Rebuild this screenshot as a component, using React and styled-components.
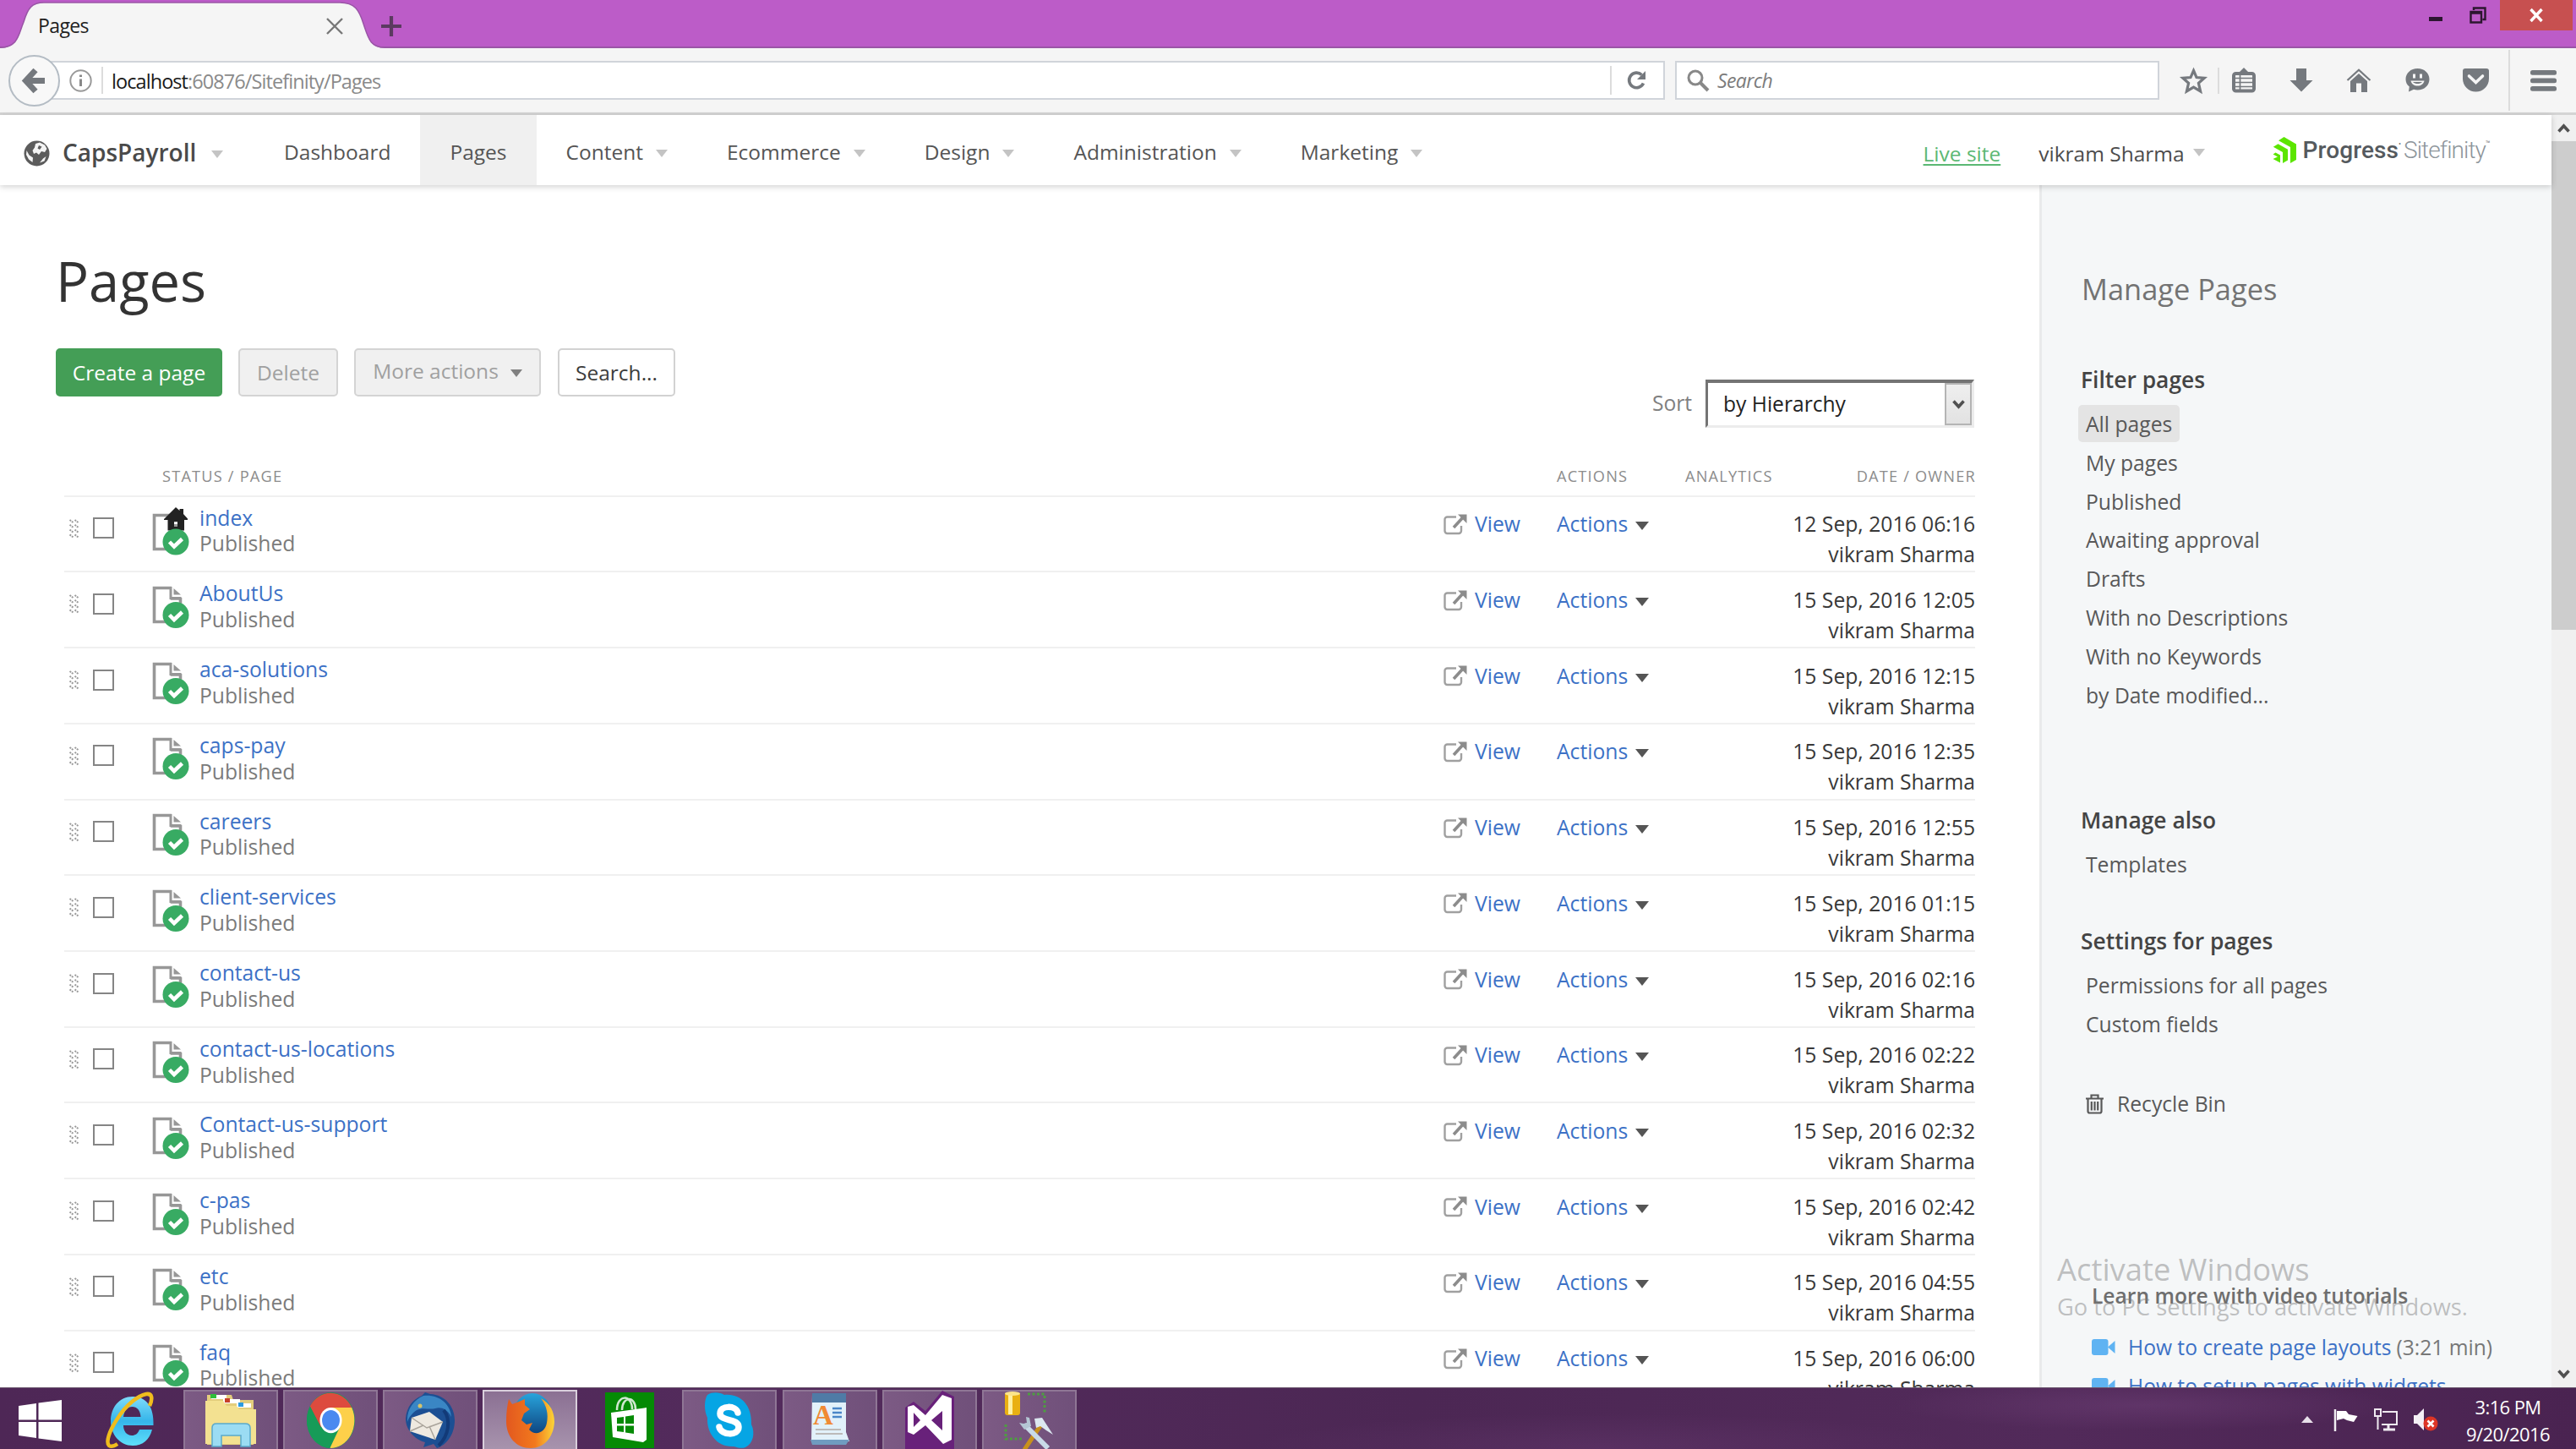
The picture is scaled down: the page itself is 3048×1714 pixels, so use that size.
import React from "react";
import styled, { createGlobalStyle, css } from "styled-components";

const Global = createGlobalStyle`
  * { box-sizing: border-box; }
  html, body { margin: 0; padding: 0; overflow: hidden; }
  body { font-family: "Open Sans", "Noto Sans", sans-serif; color: #444; background: #fff; }
  svg { display: block; flex: none; overflow: visible; }
`;

const Screen = styled.div`
  width: 3048px;
  height: 1714px;
  display: flex;
  flex-direction: column;
  overflow: hidden;
  background: #fff;
`;

/* ---------- browser chrome ---------- */

const TitleBar = styled.header`
  height: 57px;
  flex: none;
  display: flex;
  align-items: flex-start;
  background: #bc5cc8;
  border-bottom: 2px solid #9a55a6;
  position: relative;
`;

const Tab = styled.div`
  width: 451px;
  height: 57px;
  padding: 0 45px 0 45px;
  display: flex;
  align-items: center;
  justify-content: space-between;
  position: relative;
  z-index: 1;
`;

const TabShape = styled.svg`
  position: absolute;
  left: 0;
  top: 0;
`;

const TabTitle = styled.span`
  position: relative;
  font-size: 23px;
  letter-spacing: -0.6px;
  line-height: 32px;
  color: #222;
  padding-top: 3px;
`;

const TabClose = styled.svg`
  position: relative;
  top: 2px;
`;

const NewTab = styled.div`
  padding: 19px 0 0 0;
`;

const WindowButtons = styled.div`
  margin-left: auto;
  height: 36px;
  display: flex;
  padding-right: 4px;
`;

const WindowButton = styled.div`
  width: ${(p) => p.$width}px;
  height: 36px;
  display: flex;
  justify-content: center;
  align-items: ${(p) => (p.$low ? "flex-end" : "center")};
  padding-bottom: ${(p) => (p.$low ? 11 : 0)}px;
  background: ${(p) => (p.$close ? "#c75050" : "transparent")};
`;

const Toolbar = styled.div`
  height: 79px;
  flex: none;
  display: flex;
  align-items: center;
  padding: 0 23px 0 10px;
  background: #f5f5f5;
  border-bottom: 3px solid #d4d4d4;
`;

const BackButton = styled.div`
  width: 61px;
  height: 61px;
  flex: none;
  border: 2px solid #b4bcc4;
  border-radius: 50%;
  background: #f8f8f8;
  display: flex;
  align-items: center;
  justify-content: center;
  position: relative;
  z-index: 1;
`;

const UrlBar = styled.div`
  width: 1911px;
  height: 46px;
  margin-left: -12px;
  padding-left: 21px;
  flex: none;
  border: 2px solid #d0d4da;
  background: #fff;
  display: flex;
  align-items: center;
`;

const ThinRule = styled.div`
  width: 2px;
  height: ${(p) => p.$height}px;
  flex: none;
  margin: ${(p) => p.$margin};
  background: #dcdcdc;
`;

const UrlText = styled.span`
  padding-top: 2px;
  font-size: 23.5px;
  letter-spacing: -0.93px;
  color: #8a8a8a;
  b { font-weight: 400; color: #1a1a1a; }
`;

const ReloadCell = styled.div`
  margin-left: auto;
  display: flex;
  align-items: center;
  padding-right: 19px;
`;

const SearchBox = styled.div`
  width: 573px;
  height: 46px;
  margin-left: 12px;
  padding-left: 12px;
  flex: none;
  border: 2px solid #d0d4da;
  background: #fff;
  display: flex;
  align-items: center;
  gap: 9px;
  font-size: 23px;
  font-style: italic;
  letter-spacing: -0.6px;
  color: #7c7c7c;
`;

const ToolIcons = styled.div`
  flex: 1;
  display: flex;
  align-items: center;
  justify-content: space-between;
  margin-left: 25px;
`;

const IconGroup = styled.div`
  display: flex;
  align-items: center;
  gap: ${(p) => p.$gap}px;
`;

/* ---------- site navigation ---------- */

const Page = styled.div`
  flex: 1;
  min-height: 0;
  display: flex;
`;

const PageView = styled.div`
  width: 3019px;
  flex: none;
  display: flex;
  flex-direction: column;
`;

const NavBar = styled.nav`
  height: 83px;
  flex: none;
  display: flex;
  align-items: stretch;
  background: #fff;
  box-shadow: 0 2px 7px rgba(0, 0, 0, 0.18);
  position: relative;
  z-index: 2;
  padding-left: 28px;
`;

const Brand = styled.div`
  width: 273px;
  display: flex;
  align-items: center;
  color: #4a4a4a;
  font-weight: 600;
  font-size: 28px;
  padding-top: 8px;
`;

const BrandName = styled.span`
  margin: -3px 18px 0 15px;
`;

const NavItem = styled.div`
  display: flex;
  align-items: center;
  gap: 15px;
  padding: 4px 35px 0 35px;
  font-size: 24.5px;
  color: #555;
  background: ${(p) => (p.$active ? "#f0f0f0" : "transparent")};
`;

const Caret = styled.i`
  width: 0;
  height: 0;
  flex: none;
  margin-top: ${(p) => p.$drop || 0}px;
  border-left: ${(p) => p.$size || 7.5}px solid transparent;
  border-right: ${(p) => p.$size || 7.5}px solid transparent;
  border-top: ${(p) => (p.$size || 7.5) * 1.25}px solid ${(p) => p.$color || "#c4c4c4"};
`;

const NavRight = styled.div`
  margin-left: auto;
  display: flex;
  align-items: center;
  padding: 8px 77px 0 0;
  font-size: 24.5px;
  color: #4c4c4c;
`;

const LiveSite = styled.a`
  color: #5bb873;
  text-decoration: underline;
  text-decoration-thickness: 2px;
  text-underline-offset: 3px;
  margin-right: 45px;
`;

const UserName = styled.span`
  margin-right: 10px;
`;

const Logo = styled.div`
  display: flex;
  align-items: center;
  margin: -9px 0 0 80px;
  font-family: Roboto, "Liberation Sans", sans-serif;
  font-size: 28px;
`;

const LogoStrong = styled.span`
  margin-left: 7px;
  font-weight: 500;
  color: #555a5e;
  letter-spacing: 0.1px;
`;

const LogoLight = styled.span`
  margin-left: 5px;
  font-weight: 300;
  color: #8d959b;
  letter-spacing: -0.9px;
`;

const LogoMark = styled.sup`
  font-size: 9px;
  line-height: 1;
  align-self: flex-start;
  color: #777;
  margin-top: 5px;
  width: 1px;
`;

/* ---------- scrollbar ---------- */

const Scrollbar = styled.div`
  flex: 1;
  display: flex;
  flex-direction: column;
  justify-content: space-between;
  background: #f0f0f0;
`;

const ScrollCap = styled.div`
  height: 31px;
  display: flex;
  align-items: center;
  justify-content: center;
`;

const ScrollThumb = styled.div`
  height: 578px;
  margin-bottom: auto;
  background: #cdcdcd;
`;

/* ---------- main column ---------- */

const Content = styled.div`
  flex: 1;
  min-height: 0;
  display: flex;
  overflow: hidden;
`;

const Main = styled.main`
  width: 2413px;
  flex: none;
  padding: 73px 76px 0 66px;
`;

const Title = styled.h1`
  margin: 0 0 40px;
  font-weight: 400;
  font-size: 65px;
  line-height: 80px;
  color: #333;
`;

const ActionBar = styled.div`
  height: 94px;
  display: flex;
  align-items: flex-start;
`;

const Button = styled.button`
  width: ${(p) => p.$width}px;
  height: 57px;
  margin: 0 ${(p) => p.$gap || 0}px 0 0;
  padding: 0 0 ${(p) => p.$lift || 0}px;
  display: flex;
  align-items: center;
  justify-content: center;
  gap: 14px;
  white-space: nowrap;
  font-family: inherit;
  font-size: 24.5px;
  border-radius: 5px;
  border: 2px solid #d2d2d2;
  background: #fff;
  color: #3c3c3c;
  ${(p) => p.$primary && css`background: #449e56; border-color: #449e56; color: #fff;`}
  ${(p) => p.$disabled && css`background: #f0f0f0; border-color: #d4d4d4; color: #a0a0a0;`}
`;

const Sort = styled.label`
  margin: 37px 1px 0 auto;
  display: flex;
  align-items: center;
  font-size: 24.6px;
  color: #808080;
`;

const SortText = styled.span`
  padding-bottom: 2px;
`;

const Select = styled.div`
  width: 318px;
  height: 57px;
  margin-left: 16px;
  padding-left: 18px;
  display: flex;
  align-items: center;
  justify-content: space-between;
  background: #fff;
  border-style: solid;
  border-width: 4px 3px 3px 3px;
  border-color: #747474 #ececec #ececec #747474;
  color: #222;
`;

const SelectArrow = styled.div`
  width: 32px;
  height: 100%;
  border: 2px solid #b4b4b4;
  background: linear-gradient(#efefef, #e2e2e2);
  display: flex;
  align-items: center;
  justify-content: center;
`;

const rowGrid = css`
  display: grid;
  grid-template-columns: 34px 71px 56px 1471px 134px 152px 1fr;
  margin-left: 10px;
`;

const HeadRow = styled.div`
  ${rowGrid}
  height: 81.7px;
  align-items: end;
  border-bottom: 2px solid #f0f0f0;
  font-size: 18.2px;
  line-height: 45px;
  letter-spacing: 1.2px;
  color: #8c8c8c;
`;

const HeadCell = styled.span`
  grid-column: ${(p) => p.$col};
  grid-row: 1;
  margin-left: ${(p) => p.$shift || 0}px;
  justify-self: ${(p) => (p.$right ? "end" : "start")};
  margin-right: ${(p) => (p.$right ? -1 : 0)}px;
`;

const Row = styled.div`
  ${rowGrid}
  height: 89.73px;
  border-bottom: 2px solid #f0f0f0;
  align-items: start;
  font-size: 24.7px;
`;

const Cell = styled.div`
  padding-top: ${(p) => p.$top}px;
  padding-left: ${(p) => p.$left || 0}px;
`;

const CheckBox = styled.div`
  width: 25px;
  height: 25px;
  border: 2px solid #858585;
  background: #fff;
`;

const PageName = styled.div`
  padding-top: 10px;
  line-height: 30.8px;
  margin-left: -1px;
  color: #7b7b7b;
  a { color: #3c71c6; display: block; }
`;

const LinkCell = styled.div`
  padding-top: 14.6px;
  line-height: 36px;
  display: flex;
  align-items: center;
  gap: 9px;
  color: #3c71c6;
`;

const DateCell = styled.div`
  padding-top: 14.6px;
  line-height: 36px;
  text-align: right;
  color: #383838;
`;

/* ---------- right column ---------- */

const Side = styled.aside`
  flex: 1;
  border-left: 3px solid #e9eaeb;
  background: #f5f7f8;
  padding: 98px 0 0 47px;
  position: relative;
  white-space: nowrap;
`;

const SideTitle = styled.h2`
  margin: 0 0 62px;
  font-size: 34.4px;
  font-weight: 400;
  line-height: 50px;
  color: #737373;
`;

const SideHeading = styled.h3`
  margin: ${(p) => p.$top || 0}px 0 0 -1px;
  font-size: 26.4px;
  font-weight: 600;
  line-height: 40px;
  color: #444;
`;

const FilterList = styled.ul`
  list-style: none;
  margin: ${(p) => p.$top}px 0 0;
  padding: 0 0 0 5px;
  font-size: 24.7px;
  line-height: 45.8px;
  color: #585858;
`;

const Current = styled.span`
  display: inline-block;
  height: 44px;
  line-height: 45px;
  margin-left: -9px;
  padding: 0 9px;
  border-radius: 5px;
  background: #e4e4e4;
`;

const RecycleBin = styled.div`
  margin-top: 48px;
  padding-left: 5px;
  display: flex;
  align-items: center;
  gap: 16px;
  font-size: 24.7px;
  line-height: 46px;
  color: #585858;
`;

const Tutorials = styled.section`
  margin-top: 184px;
  padding-left: 12px;
  font-size: 24.6px;
`;

const TutorialsTitle = styled.h4`
  margin: 0 0 18px;
  font-size: 24.6px;
  line-height: 40px;
  font-weight: 600;
  color: #6e6e6e;
`;

const Tutorial = styled.div`
  height: 46px;
  display: flex;
  align-items: center;
  color: #777;
  a { color: #3c71c6; margin: 0 6px 0 15px; }
`;

const Watermark = styled.div`
  position: absolute;
  left: 18px;
  top: 1256px;
  color: rgba(120, 120, 120, 0.45);
  font-size: 27.3px;
  line-height: 38px;
  strong { display: block; font-weight: 400; font-size: 36.4px; line-height: 52px; }
`;

/* ---------- taskbar ---------- */

const Taskbar = styled.footer`
  height: 73px;
  flex: none;
  display: flex;
  align-items: stretch;
  padding-top: 2px;
  border-top: 1px solid #6d5a70;
  background:
    radial-gradient(ellipse 300px 30px at 2540px 20px, rgba(130, 80, 140, 0.3), transparent),
    radial-gradient(ellipse 420px 40px at 1900px 70px, rgba(120, 70, 130, 0.25), transparent),
    linear-gradient(90deg, #4e2756, #532b5c 30%, #4c2754 55%, #522a5a 80%, #4a2351);
`;

const TaskSlot = styled.div`
  width: 112px;
  margin-left: ${(p) => p.$gap}px;
  flex: none;
  display: flex;
  justify-content: center;
  align-items: center;
  border: 2px solid transparent;
  border-bottom: 0;
  ${(p) => p.$open && css`
    border-color: #8f7695;
    background: linear-gradient(90deg, #7c5a84, #70507a);
  `}
  ${(p) => p.$focused && css`
    border-color: #d9cfdc;
    background: linear-gradient(#8b7093, #a793ad);
  `}
`;

const Tray = styled.div`
  margin-left: auto;
  display: flex;
  align-items: center;
  padding-right: 31px;
`;

const TrayIcons = styled.div`
  display: flex;
  align-items: center;
  gap: 19px;
  margin-right: 34px;
  svg:first-child { margin-right: 5px; }
`;

const Clock = styled.div`
  width: 99px;
  padding-top: 2px;
  text-align: center;
  color: #fff;
  font-size: 22px;
  letter-spacing: -0.6px;
  line-height: 32px;
  white-space: nowrap;
`;

/* ---------- drawings ---------- */

const GREY = "#75797e";

const TabOutline = () => (
  <TabShape width="456" height="57" viewBox="0 0 456 57">
    <path d="M0 57C22 57 22 40 28 26C33 9 38 3 52 3H402C420 3 425 12 430 28C436 46 438 57 456 57Z" fill="#f5f5f5" />
    <path d="M0 56C22 56 22 40 28 26C33 9 38 3 52 3H402C420 3 425 12 430 28C436 46 438 56 456 56" fill="none" stroke="#9a55a6" strokeWidth="1.5" />
  </TabShape>
);

const BackArrow = () => (
  <svg width="27" height="29" viewBox="0 0 27 29"><path d="M15 2 3.5 14.5 15 27M4 14.5H26" fill="none" stroke={GREY} strokeWidth="7" /></svg>
);

const InfoIcon = () => (
  <svg width="27" height="27" viewBox="0 0 27 27"><circle cx="13.5" cy="13.5" r="12.2" fill="none" stroke="#999" strokeWidth="2" /><path d="M13.5 11.5V20M13.5 6.5V9" stroke="#888" strokeWidth="3" /></svg>
);

const ReloadIcon = () => (
  <svg width="24" height="24" viewBox="0 0 24 24"><path d="M19.5 15.5A8.8 8.8 0 1 1 17.5 5.5" fill="none" stroke={GREY} strokeWidth="3.6" /><path d="M22 1V11H12Z" fill={GREY} /></svg>
);

const SearchIcon = () => (
  <svg width="27" height="27" viewBox="0 0 27 27"><circle cx="10" cy="10" r="8" fill="none" stroke="#888" strokeWidth="3" /><path d="M15.5 15.5 25 25" stroke="#888" strokeWidth="4" /></svg>
);

const StarIcon = () => (
  <svg width="31" height="31" viewBox="0 0 31 31"><path d="M15.5 3.5 19 11.6 28.2 12.3 21.4 18.4 23.6 28 15.5 23.2 7.4 28 9.6 18.4 2.8 12.3 12 11.6Z" fill="none" stroke={GREY} strokeWidth="3.2" /></svg>
);

const ClipboardIcon = () => (
  <svg width="28" height="30" viewBox="0 0 28 30">
    <path d="M8 6 14 0 20 6Z" fill={GREY} />
    <rect x="2" y="7" width="24" height="20.5" rx="2.5" fill="#f5f5f5" stroke={GREY} strokeWidth="4" />
    <path d="M4 12.5H24M4 17.5H24M4 22.5H24M9.5 9V26" stroke={GREY} strokeWidth="1.7" />
  </svg>
);

const DownloadIcon = () => (
  <svg width="28" height="28" viewBox="0 0 28 28"><path d="M8 0H20V14H27.5L14 27.5 .5 14H8Z" fill={GREY} /></svg>
);

const HomeIcon = () => (
  <svg width="30" height="28" viewBox="0 0 30 28">
    <path d="M1.5 14 15 1.8 28.5 14" fill="none" stroke={GREY} strokeWidth="2.2" />
    <path d="M15 6 25 15V28H18V17.5H12V28H5V15Z" fill={GREY} />
  </svg>
);

const ChatIcon = () => (
  <svg width="29" height="28" viewBox="0 0 29 28">
    <path d="M14.5 0C22.5 0 28.5 5.5 28.5 12.7S22.5 25.5 14.5 25.5C13 25.5 11.5 25.3 10 24.8L4 27.5 4.8 21.5C2 19.5 .5 16.3 .5 12.7 .5 5.5 6.5 0 14.5 0Z" fill={GREY} />
    <path d="M10.5 6.5V11.5M18.5 6.5V11.5" stroke="#f5f5f5" strokeWidth="3" />
    <path d="M6.5 14.5H22.5C21.5 18.5 18.5 20.5 14.5 20.5S7.5 18.5 6.5 14.5Z" fill="#f5f5f5" />
    <path d="M9 16H20C18.5 17.5 16.5 18 14.5 18S10.5 17.5 9 16Z" fill={GREY} />
  </svg>
);

const PocketIcon = () => (
  <svg width="31" height="28" viewBox="0 0 31 28"><path d="M3 0H28A3 3 0 0 1 31 3V12A15.5 15.5 0 0 1 0 12V3A3 3 0 0 1 3 0Z" fill={GREY} /><path d="M7.5 9 15.5 16.5 23.5 9" fill="none" stroke="#f5f5f5" strokeWidth="3.6" strokeLinecap="round" /></svg>
);

const MenuIcon = () => (
  <svg width="31" height="25" viewBox="0 0 31 25" fill={GREY}><rect width="31" height="5.8" rx="2.5" /><rect y="9.5" width="31" height="5.8" rx="2.5" /><rect y="19" width="31" height="5.8" rx="2.5" /></svg>
);

const GlobeIcon = () => (
  <svg width="31" height="31" viewBox="0 0 31 31">
    <circle cx="15.5" cy="15.5" r="15" fill="#5c5c5c" />
    <path d="M14 4 19 2.5 25 5.5 27.5 10 25 14 21 13 18 17 15 14.500 12 16 10.500 12 13 8.500Z" fill="#f4f4f4" />
    <path d="M18 6 21.500 7.500 19 11 16.500 9.500Z" fill="#5c5c5c" />
    <path d="M3.500 12 6.500 17.500 11 20.500 10.500 26 6 22.500 3 17ZM19 26.500 23 21.500 26.500 19 24.500 24.500Z" fill="#f4f4f4" />
  </svg>
);

const ProgressMark = () => (
  <svg width="29" height="31" viewBox="0 0 29 31" fill="#5ce500">
    <path d="M13.5 0 28 8.5V27L21 31V12L7 4.3Z" />
    <path d="M6.5 8.3 18 14.8V27.5L12 31V18L.8 11.7Z" />
    <path d="M3.5 18.5 9 21.5V30.5L.5 26 6 23.5 .5 20.5Z" />
  </svg>
);

const Chevron = ({ up, width = 15, height = 11 }) => (
  <svg width={width} height={height} viewBox="0 0 15 11"><path d={up ? "M1.5 9.5 7.5 3 13.5 9.5" : "M1.5 1.5 7.5 8 13.5 1.5"} fill="none" stroke="#505050" strokeWidth="3.6" /></svg>
);

const GripIcon = () => (
  <svg width="12" height="23" viewBox="0 0 12 23">
    {[0, 5.8, 11.6, 17.4].map((y) => (
      <path key={y} d={`M.5 ${y + 1}L4.5 ${y + 4}M6.5 ${y + 1}L10.5 ${y + 4}`} stroke="#9a9a9a" strokeWidth="2" strokeDasharray="2 1" />
    ))}
  </svg>
);

const DocIcon = ({ home }) => (
  <svg width="43" height="58" viewBox="0 0 43 58">
    <g transform={home ? "translate(0 4)" : undefined}>
      <path d="M20.5 1.5H1.5V41.5H32.5V14H22.5V1.5Z" fill="#fff" stroke="#979797" strokeWidth="3.6" />
      <path d="M22 -1H35V13H22Z" fill="#fff" />
      <path d="M24.5 2V9.5H33Z" fill="#979797" />
      <path d="M21 0V13.5H33.5" fill="none" stroke="#979797" strokeWidth="3" />
    </g>
    {home && <path d="M13 10 27 -4 31.500 0V-2H36V4L41 9.500V11H37V23.500H17.500V11H13ZM25 13V19H29V13Z" fill="#222" fillRule="evenodd" />}
    <circle cx="27" cy={home ? 37 : 33.5} r="15.5" fill="#38ab63" />
    <path d="M19.5 34.500 25 40 34.500 31" transform={home ? "translate(0 2.5)" : "translate(0 -1)"} fill="none" stroke="#fff" strokeWidth="4.5" />
  </svg>
);

const ExternalIcon = () => (
  <svg width="28" height="25" viewBox="0 0 28 25">
    <path d="M15 3.5H4.5A3 3 0 0 0 1.5 6.5V20A3 3 0 0 0 4.5 23H18A3 3 0 0 0 21 20V14" fill="none" stroke="#a0a0a0" strokeWidth="2.4" />
    <path d="M12 16 23 4" stroke="#8c8c8c" strokeWidth="3.6" /><path d="M17 .5H27.5V11Z" fill="#8c8c8c" />
  </svg>
);

const TrashIcon = () => (
  <svg width="21" height="24" viewBox="0 0 21 24" fill="none" stroke="#585858" strokeWidth="2.2">
    <path d="M0 5.5H21M6.5 5V1.5H14.5V5M2.5 6V20.5A2 2 0 0 0 4.5 22.5H16.5A2 2 0 0 0 18.5 20.5V6" /><path d="M6.8 9V19.5M10.5 9V19.5M14.2 9V19.5" />
  </svg>
);

const VideoIcon = () => (
  <svg width="28" height="19" viewBox="0 0 28 19" fill="#5fb3f2"><rect width="19.5" height="19" rx="3" /><path d="M19 9.5 27.5 2V17Z" /></svg>
);

const WindowsIcon = () => (
  <svg width="51" height="49" viewBox="0 0 51 49" fill="#fff"><path d="M0 7 21 4V23.5H0ZM23.5 3.5 51 0V23.5H23.5ZM0 26H21V45L0 42ZM23.5 26H51V49L23.5 45.5Z" /></svg>
);

const ExplorerE = () => (
  <svg width="58" height="68" viewBox="0 0 58 68">
    <defs><linearGradient id="ie" x1="0" y1="0" x2="0" y2="1"><stop offset="0" stopColor="#7fdcfa" /><stop offset=".5" stopColor="#35b5ea" /><stop offset="1" stopColor="#5fe0fb" /></linearGradient></defs>
    <path d="M32 6C16 6 6 19 6 35S17 64 32 64C44 64 52 57 55 45H40C38 50 35 52 31 52 25 52 21 47 21 40H56.5C57.5 18 48 6 32 6ZM21 30C22 22 26 18 31.5 18S41 22 41.5 30Z" fill="url(#ie)" />
    <path d="M52 17C56 8 55 2 48 3 38 5 24 16 14 32 4 47 0 60 4 64 7 66 11 64 14 62" fill="none" stroke="#f0bd1d" strokeWidth="4.5" />
  </svg>
);

const FolderIcon = () => (
  <svg width="62" height="66" viewBox="0 0 62 66">
    <path d="M3 3H32L34 9H58V62H3Z" fill="#e3cd7c" />
    <path d="M8 3H26V8H8ZM22 8H42V13H22ZM38 13H55V18H38Z" fill="#fff" />
    <rect x="7" y="2" width="7" height="5" fill="#2fbf3a" /><rect x="24" y="7" width="6" height="5" fill="#c8402a" /><rect x="40" y="12" width="6" height="5" fill="#2d9be0" />
    <path d="M1 10H22L26 16H38L41 20H61V61H1Z" fill="#f3e191" />
    <path d="M9 64V42Q9 37 14 37H48Q54 37 54 42V64H43V51H20V64Z" fill="#9bdcf3" stroke="#5aa9cc" strokeWidth="1.5" />
  </svg>
);

const ChromeIcon = () => (
  <svg width="57" height="66" viewBox="0 0 48 48" preserveAspectRatio="none">
    <circle cx="24" cy="24" r="24" fill="#169b58" />
    <path d="M24 24 3.2 12A24 24 0 0 1 44.8 13H24Z" fill="#dd4b3e" />
    <path d="M44.8 13A24 24 0 0 1 23 48L34 28 24 13Z" fill="#fdd04a" />
    <path d="M3.2 12 14 30 24 24 22 12Z" fill="#dd4b3e" />
    <path d="M3.2 12 14 30A11 11 0 0 0 27 34.5L23 48A24 24 0 0 1 3.2 12Z" fill="#169b58" />
    <circle cx="24" cy="24" r="11" fill="#fff" /><circle cx="24" cy="24" r="8.8" fill="#4a89f0" />
  </svg>
);

const MailBirdIcon = () => (
  <svg width="60" height="68" viewBox="0 0 60 68">
    <path d="M24 1 30 3C48 4 59 18 59 34 59 50 50 63 38 67L34 62 22 66 24 60C10 56 1 44 1 32 2 18 10 9 20 5Z" fill="#1c4f93" />
    <path d="M22 5C40 3 54 14 55 30 50 20 42 18 36 20 28 22 22 18 14 22 8 26 4 32 3 36 2 22 10 10 22 5Z" fill="#3a86c4" />
    <path d="M8 31 29 24 45 36 36 57 6 47Z" fill="#eee9e0" /><path d="M8 31 26 43 45 36M6 47 22 40M36 57 29 41" fill="none" stroke="#aaa49b" strokeWidth="1.5" />
    <path d="M46 22C55 34 52 52 40 64" fill="none" stroke="#123a78" strokeWidth="4" /><circle cx="18" cy="17" r="2.5" fill="#d7c46a" />
  </svg>
);

const FirefoxIcon = () => (
  <svg width="57" height="66" viewBox="0 0 57 66">
    <defs>
      <linearGradient id="fxb" x1="0" y1="0" x2="0" y2="1"><stop offset="0" stopColor="#28a4dc" /><stop offset="1" stopColor="#0c3c78" /></linearGradient>
      <linearGradient id="fxo" x1="0" y1="0" x2="1" y2="0"><stop offset="0" stopColor="#e2581f" /><stop offset=".6" stopColor="#f2791d" /><stop offset="1" stopColor="#fbd437" /></linearGradient>
    </defs>
    <ellipse cx="31" cy="27" rx="23" ry="26" fill="url(#fxb)" />
    <path d="M3 8 7 14 15 11 22 8 22 15 28 20 21 25 18 33 24 38 31 36 27 44C34 52 46 48 48 36 50 26 48 16 41 7 52 13 57 23 57 35 56 54 44 66 29 66 12 66 0 53 0 34 0 24 1 16 3 8Z" fill="url(#fxo)" />
  </svg>
);

const StoreIcon = () => (
  <svg width="58" height="66" viewBox="0 0 58 66">
    <rect width="58" height="66" fill="#058a05" />
    <path d="M14 21C14 2 32 2 32 20M20 21C20 4 36 4 36 20" fill="none" stroke="#cfe8cf" strokeWidth="2.5" />
    <path d="M7 24 49 18V56L45 59 9 53Z" fill="#fff" /><path d="M14 30 22 29V37H14ZM24 28.5 34 27V37H24ZM14 39.5H22V47L14 46ZM24 39.5H34V49L24 47.5Z" fill="#058a05" />
  </svg>
);

const SkypeIcon = () => (
  <svg width="58" height="66" viewBox="0 0 58 66">
    <path d="M3 3C9-1 18 0 23 3 42 1 56 15 55 38 60 48 57 61 48 65 43 67 38 65 34 64 14 65 2 48 3 30-1 22-1 9 3 3Z" fill="#06a5e4" />
    <path d="M39 24C37 15 18 15 18 25 18 35 40 30 40 41 40 52 19 51 17 41" fill="none" stroke="#fff" strokeWidth="7.5" strokeLinecap="round" />
  </svg>
);

const WriterLetter = styled.text`
  font-family: "Liberation Serif", serif;
  font-weight: 700;
  font-size: 33px;
  fill: #f08a34;
`;

const WriterIcon = () => (
  <svg width="46" height="64" viewBox="0 0 46 64">
    <path d="M2 1H42V46L46 57H1Z" fill="#e2f1fa" /><path d="M2 0H42V11H2Z" fill="#4f7ba6" />
    <path d="M0 55H46L42 61H2Z" fill="#6f9cc0" /><WriterLetter x="3" y="37">A</WriterLetter>
    <path d="M26 18H37M26 23H37M26 28H37" stroke="#4a86c8" strokeWidth="2.5" /><path d="M6 43H36M6 48H38" stroke="#b0a8a4" strokeWidth="1.7" />
  </svg>
);

const StudioIcon = () => (
  <svg width="58" height="70" viewBox="0 0 58 70">
    <path d="M0 20 10 13 24 24 44 0 58 7V70H0Z" fill="#68217a" />
    <path d="M3 19 10 17 24 29 44 5 55 9V58L45 63 24 41 10 52 3 49ZM10 26V43L18 35ZM44 24 31 35 44 47Z" fill="#fff" fillRule="evenodd" />
  </svg>
);

const ToolsIcon = () => (
  <svg width="60" height="70" viewBox="0 0 60 70">
    <rect x="1" y="2" width="18" height="27" rx="3" fill="#e9b012" /><rect x="5" y="3" width="5" height="25" fill="#fff0a0" /><ellipse cx="10" cy="3.5" rx="9" ry="2.5" fill="#fbe58a" />
    <path d="M28 4H48V28M2 40V57H22" fill="none" stroke="#4f9c42" strokeWidth="3" strokeDasharray="3 2.5" />
    <path d="M44 40 24 70" stroke="#c8911c" strokeWidth="5" /><path d="M24 40 52 68" stroke="#c9dbe8" strokeWidth="6" />
    <path d="M18 38 24 46 32 42 30 32 26 31 27 38 23 39Z" fill="#b4c6d4" /><path d="M36 33 45 32 58 52 50 47 43 42 38 44Z" fill="#dce8f0" />
  </svg>
);

const TrayUp = () => (
  <svg width="14" height="8" viewBox="0 0 14 8"><path d="M0 8 7 0 14 8Z" fill="#e8e0ea" /></svg>
);

const FlagIcon = () => (
  <svg width="29" height="27" viewBox="0 0 29 27"><path d="M2 1V27" stroke="#f0ecf1" strokeWidth="2.5" /><path d="M4 3H15L18 7 28.5 9 24 16 16 14 12 12 4 14Z" fill="#fff" /></svg>
);

const NetworkIcon = () => (
  <svg width="28" height="27" viewBox="0 0 28 27" fill="none" stroke="#efe9f0" strokeWidth="2"><path d="M10 4H27V19H9" /><path d="M17 19V24M11 25H25" strokeWidth="3" /><path d="M1 1H8V9H1ZM4.5 9V25" /></svg>
);

const VolumeIcon = () => (
  <svg width="28" height="27" viewBox="0 0 28 27"><path d="M0 8H4L12 0V26L4 18H0Z" fill="#f4eff5" /><circle cx="20" cy="18" r="8.5" fill="#dc3526" /><path d="M16.5 14.5 23.5 21.5M23.5 14.5 16.5 21.5" stroke="#fff" strokeWidth="2.6" /></svg>
);

/* ---------- data ---------- */

const NAV = [
  ["Dashboard"], ["Pages", false, true], ["Content", true], ["Ecommerce", true],
  ["Design", true], ["Administration", true], ["Marketing", true],
];

const PAGES = [
  ["index", "12 Sep, 2016 06:16"], ["AboutUs", "15 Sep, 2016 12:05"], ["aca-solutions", "15 Sep, 2016 12:15"],
  ["caps-pay", "15 Sep, 2016 12:35"], ["careers", "15 Sep, 2016 12:55"], ["client-services", "15 Sep, 2016 01:15"],
  ["contact-us", "15 Sep, 2016 02:16"], ["contact-us-locations", "15 Sep, 2016 02:22"], ["Contact-us-support", "15 Sep, 2016 02:32"],
  ["c-pas", "15 Sep, 2016 02:42"], ["etc", "15 Sep, 2016 04:55"], ["faq", "15 Sep, 2016 06:00"],
];

const FILTERS = ["My pages", "Published", "Awaiting approval", "Drafts", "With no Descriptions", "With no Keywords", "by Date modified..."];

const TASKS = [
  [WindowsIcon, -9], [ExplorerE, -5], [FolderIcon, 7, true], [ChromeIcon, 6.1, true], [MailBirdIcon, 6.1, true],
  [FirefoxIcon, 6.1, true, true], [StoreIcon, 6.1], [SkypeIcon, 6.1, true], [WriterIcon, 6.1, true], [StudioIcon, 6.1, true], [ToolsIcon, 6.1, true],
];

const PageRow = ({ name, date, home }) => (
  <Row>
    <Cell $top={26} $left={6}><GripIcon /></Cell>
    <Cell $top={24.5}><CheckBox /></Cell>
    <Cell $top={home ? 16 : 16.5}><DocIcon home={home} /></Cell>
    <PageName><a>{name}</a>Published</PageName>
    <LinkCell><ExternalIcon /><span>View</span></LinkCell>
    <LinkCell><span>Actions</span><Caret $size={8.25} $drop={4} $color="#555" /></LinkCell>
    <DateCell><div>{date}</div><div>vikram Sharma</div></DateCell>
  </Row>
);

export default function App() {
  return (
    <Screen>
      <Global />
      <TitleBar>
        <Tab>
          <TabOutline />
          <TabTitle>Pages</TabTitle>
          <TabClose width="20" height="20" viewBox="0 0 20 20"><path d="M1 1 19 19M19 1 1 19" stroke="#777" strokeWidth="2.4" /></TabClose>
        </Tab>
        <NewTab><svg width="24" height="24" viewBox="0 0 24 24"><path d="M0 12H24M12 0V24" stroke="#5b3a60" strokeWidth="4.2" /></svg></NewTab>
        <WindowButtons>
          <WindowButton $width={48} $low><svg width="16" height="5"><rect width="16" height="5" fill="#2c1630" /></svg></WindowButton>
          <WindowButton $width={52}><svg width="20" height="20" viewBox="0 0 20 20"><path d="M5 4V1.5H18.5V15H15.5M1.5 6H14V18.5H1.5ZM1.5 7.5H14" fill="none" stroke="#2c1630" strokeWidth="2.4" /></svg></WindowButton>
          <WindowButton $width={86} $close><svg width="16" height="14" viewBox="0 0 16 14"><path d="M1.5 0 14.5 14M14.5 0 1.5 14" stroke="#fff" strokeWidth="3.4" /></svg></WindowButton>
        </WindowButtons>
      </TitleBar>
      <Toolbar>
        <BackButton><BackArrow /></BackButton>
        <UrlBar>
          <InfoIcon />
          <ThinRule $height={32} $margin="0 10px 0 11px" />
          <UrlText><b>localhost</b>:60876/Sitefinity/Pages</UrlText>
          <ReloadCell><ThinRule $height={34} $margin="0 18px 0 0" /><ReloadIcon /></ReloadCell>
        </UrlBar>
        <SearchBox><SearchIcon />Search</SearchBox>
        <ToolIcons>
          <IconGroup $gap={13}><StarIcon /><ThinRule $height={31} /></IconGroup>
          <IconGroup $gap={39.5}><ClipboardIcon /><DownloadIcon /><HomeIcon /><ChatIcon /><PocketIcon /></IconGroup>
          <IconGroup $gap={24}><ThinRule $height={72} $margin="0 0 0 8px" /><MenuIcon /></IconGroup>
        </ToolIcons>
      </Toolbar>
      <Page>
        <PageView>
          <NavBar>
            <Brand><GlobeIcon /><BrandName>CapsPayroll</BrandName><Caret $drop={2} /></Brand>
            {NAV.map(([label, menu, active]) => (
              <NavItem key={label} $active={active}>{label}{menu && <Caret $drop={4} />}</NavItem>
            ))}
            <NavRight>
              <LiveSite>Live site</LiveSite>
              <UserName>vikram Sharma</UserName><Caret $drop={-2} />
              <Logo><ProgressMark /><LogoStrong>Progress</LogoStrong><LogoMark>•</LogoMark><LogoLight>Sitefinity</LogoLight><LogoMark>™</LogoMark></Logo>
            </NavRight>
          </NavBar>
          <Content>
            <Main>
              <Title>Pages</Title>
              <ActionBar>
                <Button $width={197} $gap={19} $primary>Create a page</Button>
                <Button $width={118} $gap={19} $disabled>Delete</Button>
                <Button $width={221} $gap={20} $lift={4} $disabled>More actions<Caret $drop={6} $color="#808080" /></Button>
                <Button $width={139}>Search...</Button>
                <Sort><SortText>Sort</SortText><Select><SortText>by Hierarchy</SortText><SelectArrow><Chevron /></SelectArrow></Select></Sort>
              </ActionBar>
              <HeadRow>
                <HeadCell $col="3 / 5" $shift={11}>STATUS / PAGE</HeadCell>
                <HeadCell $col="6">ACTIONS</HeadCell>
                <HeadCell $col="7">ANALYTICS</HeadCell>
                <HeadCell $col="7" $right>DATE / OWNER</HeadCell>
              </HeadRow>
              {PAGES.map(([name, date], i) => <PageRow key={name} name={name} date={date} home={i === 0} />)}
            </Main>
            <Side>
              <SideTitle>Manage Pages</SideTitle>
              <SideHeading>Filter pages</SideHeading>
              <FilterList $top={10}>
                <li><Current>All pages</Current></li>
                {FILTERS.map((f) => <li key={f}>{f}</li>)}
              </FilterList>
              <SideHeading $top={105}>Manage also</SideHeading>
              <FilterList $top={10}><li>Templates</li></FilterList>
              <SideHeading $top={47}>Settings for pages</SideHeading>
              <FilterList $top={10}><li>Permissions for all pages</li><li>Custom fields</li></FilterList>
              <RecycleBin><TrashIcon />Recycle Bin</RecycleBin>
              <Tutorials>
                <TutorialsTitle>Learn more with video tutorials</TutorialsTitle>
                <Tutorial><VideoIcon /><a>How to create page layouts</a>(3:21 min)</Tutorial>
                <Tutorial><VideoIcon /><a>How to setup pages with widgets</a></Tutorial>
              </Tutorials>
              <Watermark><strong>Activate Windows</strong>Go to PC settings to activate Windows.</Watermark>
            </Side>
          </Content>
        </PageView>
        <Scrollbar>
          <ScrollCap><Chevron up /></ScrollCap>
          <ScrollThumb />
          <ScrollCap><Chevron /></ScrollCap>
        </Scrollbar>
      </Page>
      <Taskbar>
        {TASKS.map(([Icon, gap, open, focused], i) => (
          <TaskSlot key={i} $gap={gap} $open={open} $focused={focused}><Icon /></TaskSlot>
        ))}
        <Tray>
          <TrayIcons><TrayUp /><FlagIcon /><NetworkIcon /><VolumeIcon /></TrayIcons>
          <Clock><div>3:16 PM</div><div>9/20/2016</div></Clock>
        </Tray>
      </Taskbar>
    </Screen>
  );
}
